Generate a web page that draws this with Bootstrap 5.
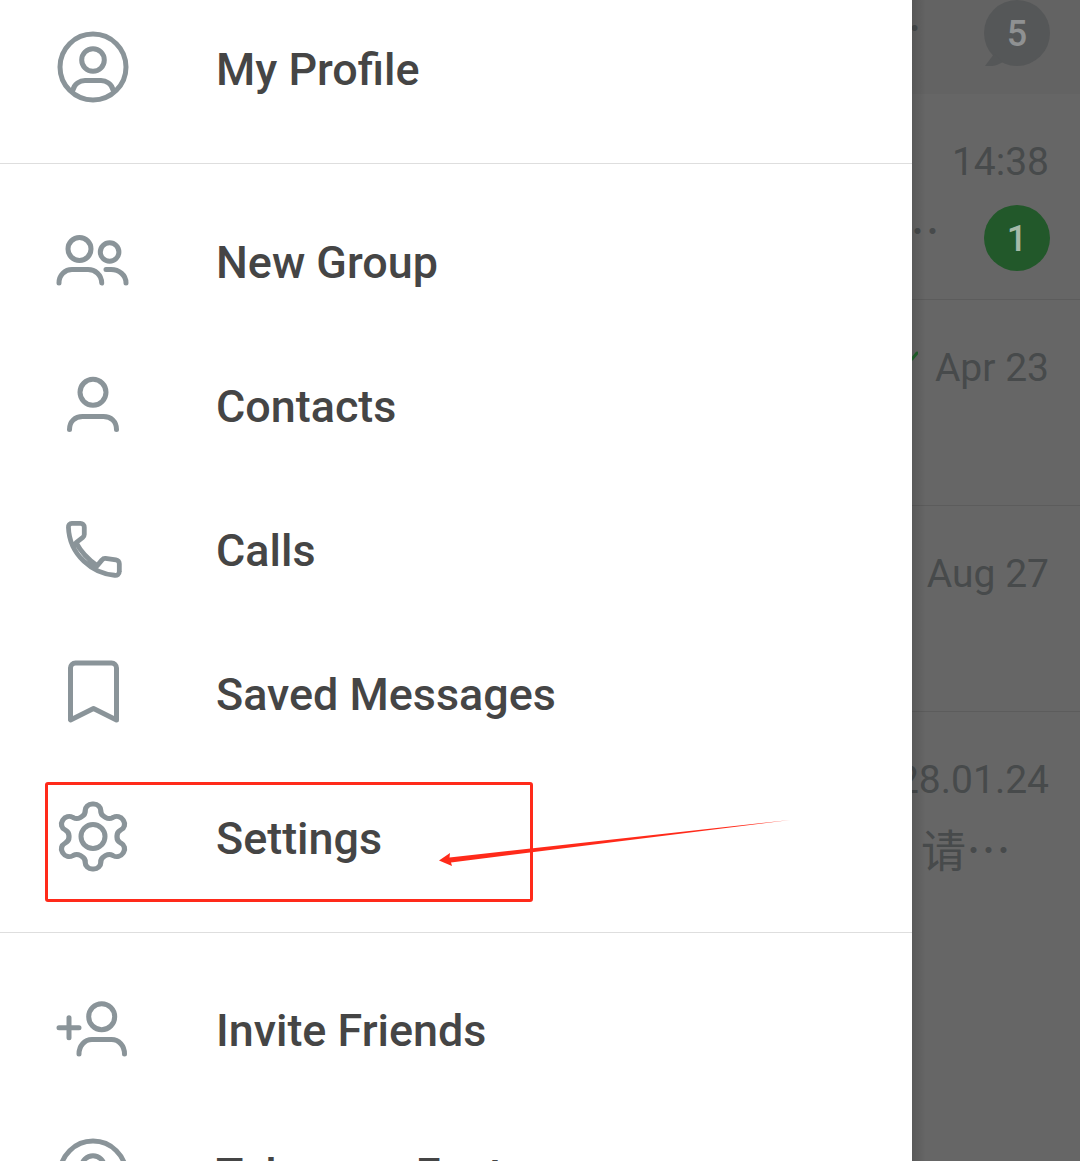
<!DOCTYPE html>
<html>

<head>
  <meta charset="utf-8">
  <meta name="viewport" content="width=device-width">
  <title>Settings menu</title>
  <link href="https://cdn.jsdelivr.net/npm/bootstrap@5.3.2/dist/css/bootstrap.min.css" rel="stylesheet">
  <script src="https://cdn.jsdelivr.net/npm/bootstrap@5.3.2/dist/js/bootstrap.bundle.min.js"></script>
  <style>
    html, body { height: 100%; overflow: hidden; }
    body { font-family: Roboto, "Noto Sans CJK SC", sans-serif; background: #666; }
    .app-shell { height: 1161px; overflow: hidden; }

    .drawer-panel { width: 912px; }
    .menu-section { border-radius: 0; }
    .menu-top { margin-top: -5px; padding-bottom: 24px; border-bottom: 1px solid #dedede; }
    .menu-top .menu-row span { padding-top: 6px; }
    .menu-mid { padding-top: 26px; padding-bottom: 22px; border-bottom: 1px solid #dedede; }
    .menu-end { padding-top: 25px; }
    .menu-row { height: 144px; padding-left: 53px; font-size: 44.9px; font-weight: 500; color: #454545; }
    .menu-row span { margin-left: 83px; padding-top: 2px; }
    .menu-icon { width: 80px; height: 80px; flex: none; fill: none; stroke: #8a9499; stroke-width: 5; stroke-linecap: round; stroke-linejoin: round; }

    .chat-panel { min-width: 0; background: #666; color: #474a4b; }
    .chat-panel::before { content: ""; position: absolute; top: 0; bottom: 0; left: 0; width: 14px; background: linear-gradient(to right, rgba(0, 0, 0, .12), rgba(0, 0, 0, 0)); z-index: 1; }
    .chat-top { height: 94px; padding-right: 30px; background: #636363; }
    .chat-row { height: 206px; padding: 46px 30px 0 0; border-bottom: 1px solid #5c5c5c; }
    .chat-last { border-bottom: 0; }
    .chat-time { font-size: 39px; line-height: 44px; margin-right: 1px; white-space: nowrap; flex: none; }
    .chat-preview { font-family: "Noto Sans CJK SC", sans-serif; font-size: 45px; line-height: 44px; color: #474a4b; white-space: nowrap; }
    .top-dots { margin: 5px 0 0 -35px; }
    .row-dots { margin: 0 0 16px -17px; }
    .chat-line { margin-top: 21px; height: 66px; }
    .last-line { margin-top: 25px; padding-left: 9px; }
    .count-dot { width: 66px; height: 66px; padding-top: 2px; font-size: 36px; font-weight: 500; color: #8f9192; flex: none; }
    .count-muted { background: #555758; }
    .count-green { background: #22582a; color: #a5baa8; }
    .count-tail { position: absolute; left: 0; bottom: 0; width: 24px; height: 24px; }
    .read-tick { width: 24px; height: 44px; margin-right: 17px; flex: none; fill: none; stroke: #1e5a28; stroke-width: 3; stroke-linecap: round; position: relative; z-index: 2; }

    .mark-box { position: absolute; left: 45px; top: 782px; width: 488px; height: 120px; border: 3px solid #ff2a1a; border-radius: 3px; }
    .mark-arrow { position: absolute; left: 430px; top: 810px; width: 370px; height: 60px; }
  </style>
</head>

<body>
  <div class="app-shell d-flex position-relative">
    <nav class="drawer-panel bg-white flex-shrink-0">
      <ul class="list-group list-group-flush menu-section menu-top">
        <li class="list-group-item d-flex align-items-center border-0 py-0 pe-0 menu-row">
          <svg class="menu-icon" viewBox="0 0 80 80">
            <circle cx="40" cy="40" r="33"></circle>
            <circle cx="40" cy="33" r="11.3"></circle>
            <path d="M20 63c1-6 7-9.500 12-9.500h16c5 0 11 3.500 12 9.500"></path>
          </svg>
          <span>My Profile</span>
        </li>
      </ul>

      <ul class="list-group list-group-flush menu-section menu-mid">
        <li class="list-group-item d-flex align-items-center border-0 py-0 pe-0 menu-row">
          <svg class="menu-icon" viewBox="0 0 80 80">
            <circle cx="26.500" cy="27" r="11.500"></circle>
            <circle cx="56.600" cy="30" r="9.300"></circle>
            <path d="M6 61c0-8 6-13.500 13-13.500h16c7 0 13.500 5 13.700 13.500"></path>
            <path d="M53 47.500h5c8 0 15 5.500 15 13.500"></path>
          </svg>
          <span>New Group</span>
        </li>
        <li class="list-group-item d-flex align-items-center border-0 py-0 pe-0 menu-row">
          <svg class="menu-icon" viewBox="0 0 80 80">
            <circle cx="40" cy="26.300" r="13"></circle>
            <path d="M16.500 63.500c0-8 5.500-13 13-13h21c7.500 0 13 5 13 13"></path>
          </svg>
          <span>Contacts</span>
        </li>
        <li class="list-group-item d-flex align-items-center border-0 py-0 pe-0 menu-row">
          <svg class="menu-icon" viewBox="0 0 80 80">
            <path transform="translate(2 -0.5) scale(.96)" d="M14 18.500a3.500 3.500 0 0 1 3.500-4h9a4 4 0 0 1 4 4v7.500a4 4 0 0 1-1.500 3l-7 5.500c5.500 10.500 12.500 17.500 22 24l5-6a4 4 0 0 1 3.500-1.500l11 1.500a4 4 0 0 1 3.500 4v8a4 4 0 0 1-5 4C40 67 15 48 14 18.500z"></path>
          </svg>
          <span>Calls</span>
        </li>
        <li class="list-group-item d-flex align-items-center border-0 py-0 pe-0 menu-row">
          <svg class="menu-icon" viewBox="0 0 80 80">
            <path d="M17.500 66V14a5 5 0 0 1 5-5h36a5 5 0 0 1 5 5v52L40.500 54.500z"></path>
          </svg>
          <span>Saved Messages</span>
        </li>
        <li class="list-group-item d-flex align-items-center border-0 py-0 pe-0 menu-row">
          <svg class="menu-icon" viewBox="0 0 80 80">
            <g transform="translate(-2 -0.5) scale(3.5 3.25)" stroke-width="1.500">
              <path d="M12.220 2h-.44a2 2 0 0 0-2 2v.18a2 2 0 0 1-1 1.730l-.43.25a2 2 0 0 1-2 0l-.15-.08a2 2 0 0 0-2.730.73l-.22.38a2 2 0 0 0 .73 2.730l.15.1a2 2 0 0 1 1 1.720v.51a2 2 0 0 1-1 1.740l-.15.09a2 2 0 0 0-.73 2.730l.22.38a2 2 0 0 0 2.730.73l.15-.08a2 2 0 0 1 2 0l.43.25a2 2 0 0 1 1 1.730V20a2 2 0 0 0 2 2h.44a2 2 0 0 0 2-2v-.18a2 2 0 0 1 1-1.730l.43-.25a2 2 0 0 1 2 0l.15.08a2 2 0 0 0 2.730-.73l.22-.39a2 2 0 0 0-.73-2.730l-.15-.08a2 2 0 0 1-1-1.740v-.5a2 2 0 0 1 1-1.740l.15-.09a2 2 0 0 0 .73-2.730l-.22-.38a2 2 0 0 0-2.730-.73l-.15.08a2 2 0 0 1-2 0l-.43-.25a2 2 0 0 1-1-1.730V4a2 2 0 0 0-2-2z"></path>
            </g>
            <circle cx="40" cy="38.500" r="12"></circle>
          </svg>
          <span>Settings</span>
        </li>
      </ul>

      <ul class="list-group list-group-flush menu-section menu-end">
        <li class="list-group-item d-flex align-items-center border-0 py-0 pe-0 menu-row">
          <svg class="menu-icon" viewBox="0 0 80 80">
            <circle cx="48.700" cy="26.700" r="13"></circle>
            <path d="M26 64c0-8 5.500-14.500 13-14.500h19.500c7.500 0 13 6.500 13 14.500"></path>
            <path d="M6 37.700h20M16 27.700v20"></path>
          </svg>
          <span>Invite Friends</span>
        </li>
        <li class="list-group-item d-flex align-items-center border-0 py-0 pe-0 menu-row">
          <svg class="menu-icon" viewBox="0 0 80 80">
            <circle cx="40" cy="40" r="33"></circle>
            <circle cx="40" cy="33" r="11.300"></circle>
            <path d="M20 63c1-6 7-9.500 12-9.500h16c5 0 11 3.500 12 9.500"></path>
          </svg>
          <span>Telegram Features</span>
        </li>
      </ul>
    </nav>

    <section class="chat-panel flex-grow-1 position-relative overflow-hidden">
      <div class="chat-top d-flex justify-content-between align-items-start">
        <div class="chat-preview top-dots">…</div>
        <div class="count-dot count-muted rounded-circle d-flex align-items-center justify-content-center position-relative">
          <svg class="count-tail" viewBox="0 0 24 24"><path d="M10 12 1 24c7 1 13-1 18-4z" fill="#555758"></path></svg>
          <span class="position-relative">5</span>
        </div>
      </div>

      <div class="chat-row">
        <div class="d-flex justify-content-end"><div class="chat-time">14:38</div></div>
        <div class="chat-line d-flex justify-content-between align-items-center">
          <div class="chat-preview row-dots">…</div>
          <div class="count-dot count-green rounded-circle d-flex align-items-center justify-content-center">1</div>
        </div>
      </div>

      <div class="chat-row">
        <div class="d-flex justify-content-end align-items-start">
          <svg class="read-tick" viewBox="0 0 24 44"><path d="M18 13l5-6"></path></svg>
          <div class="chat-time">Apr 23</div>
        </div>
      </div>

      <div class="chat-row">
        <div class="d-flex justify-content-end"><div class="chat-time">Aug 27</div></div>
      </div>

      <div class="chat-row chat-last">
        <div class="d-flex justify-content-end"><div class="chat-time">28.01.24</div></div>
        <div class="chat-preview last-line">请…</div>
      </div>
    </section>

    <div class="mark-box"></div>
    <svg class="mark-arrow" viewBox="0 0 370 60"><polygon points="9,50.500 20,43 19.500,47.500 360,10 21,52.500 22,56" fill="#ff2a1a"></polygon></svg>
  </div>
</body>

</html>
